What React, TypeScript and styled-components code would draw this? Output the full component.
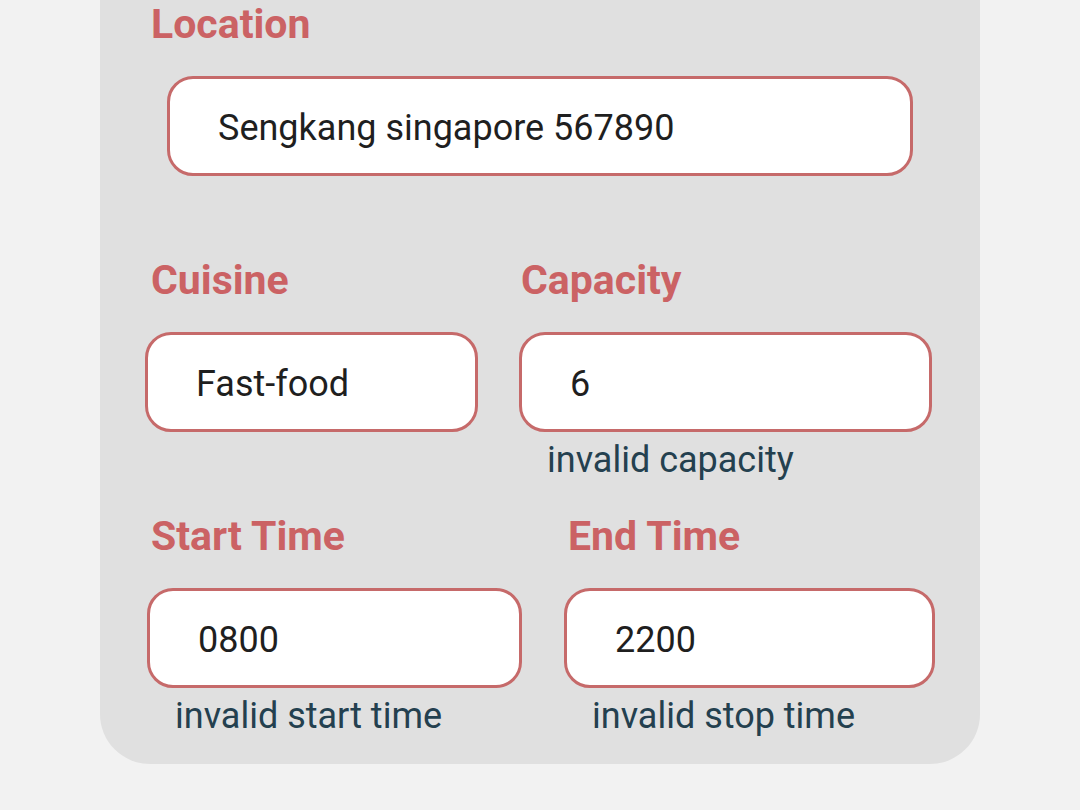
import React, { useState } from "react";
import styled, { createGlobalStyle } from "styled-components";

const GlobalStyle = createGlobalStyle`
  * { box-sizing: border-box; }
  body {
    margin: 0;
    background: #f2f2f2;
    font-family: Roboto, "Liberation Sans", sans-serif;
  }
`;

const Page = styled.main`
  padding: 0 100px 46px;
`;

const Card = styled.form`
  padding: 0 45px 25px;
  background: #e0e0e0;
  border-radius: 0 0 50px 50px;
`;

const Row = styled.div<{ $columns: string; $gap: number; $padding: string }>`
  display: grid;
  grid-template-columns: ${(p) => p.$columns};
  column-gap: ${(p) => p.$gap}px;
  padding: ${(p) => p.$padding};
  min-height: 256px;

  &:last-child { min-height: 0; }
`;

const Field = styled.div`
  min-width: 0;
  display: flex;
  flex-direction: column;
`;

const Label = styled.label<{ $indent: number }>`
  padding-left: ${(p) => p.$indent}px;
  margin-bottom: 28px;
  color: #cb6264;
  font-size: 41px;
  font-weight: 700;
  line-height: 48px;
`;

const Input = styled.input<{ $inset?: number }>`
  min-width: 0;
  height: 100px;
  margin: 0 ${(p) => p.$inset ?? 0}px;
  padding: 4px 48px 0;
  border: 3px solid #c66a6a;
  border-radius: 26px;
  background: #fff;
  color: #1f1f1f;
  font: 400 36px Roboto, "Liberation Sans", sans-serif;
  outline: none;
`;

const ErrorText = styled.p`
  margin: 5px 0 0;
  padding-left: 28px;
  color: #24404f;
  font-size: 36px;
  line-height: 46px;
`;

type FieldProps = {
  id: string;
  label: string;
  initial: string;
  indent: number;
  inset?: number;
  error?: string;
};

function FormField({ id, label, initial, indent, inset, error }: FieldProps) {
  const [value, setValue] = useState(initial);
  return (
    <Field>
      <Label htmlFor={id} $indent={indent}>{label}</Label>
      <Input
        id={id}
        value={value}
        $inset={inset}
        aria-invalid={!!error}
        aria-describedby={error ? `${id}-error` : undefined}
        onChange={(e) => setValue(e.target.value)}
      />
      {error && <ErrorText id={`${id}-error`}>{error}</ErrorText>}
    </Field>
  );
}

export default function App() {
  return (
    <>
      <GlobalStyle />
      <Page>
        <Card>
          <Row $columns="1fr" $gap={0} $padding="0">
            <FormField id="location" label="Location" initial="Sengkang singapore 567890" indent={6} inset={22} />
          </Row>
          <Row $columns="333fr 413fr" $gap={41} $padding="0 3px 0 0">
            <FormField id="cuisine" label="Cuisine" initial="Fast-food" indent={6} />
            <FormField id="capacity" label="Capacity" initial="6" indent={2} error="invalid capacity" />
          </Row>
          <Row $columns="375fr 371fr" $gap={42} $padding="0 0 0 2px">
            <FormField id="start" label="Start Time" initial="0800" indent={4} error="invalid start time" />
            <FormField id="end" label="End Time" initial="2200" indent={4} error="invalid stop time" />
          </Row>
        </Card>
      </Page>
    </>
  );
}
